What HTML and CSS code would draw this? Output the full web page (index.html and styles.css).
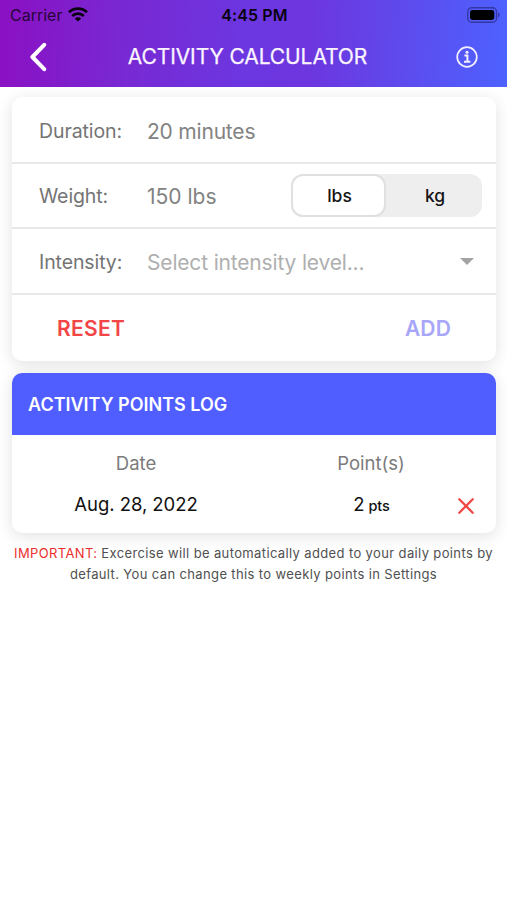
FILE: index.html
```html
<!DOCTYPE html>
<html lang="en">
<head>
<meta charset="utf-8">
<meta name="viewport" content="width=device-width, initial-scale=1">
<title>Activity Calculator</title>
<link rel="stylesheet" href="styles.css">
</head>
<body>
<header class="header">
  <div class="status">
    <div class="status-left"><span class="carrier">Carrier</span>
      <svg class="wifi" width="20" height="15" viewBox="0 0 20 15" fill="none" stroke="#08030f" stroke-width="2.7"><path d="M1 5.3a13 13 0 0 1 18 0M4.2 8.9a8.4 8.4 0 0 1 11.6 0"/><path d="M10 14.6 6.8 11.5a4.6 4.6 0 0 1 6.4 0z" fill="#08030f" stroke="none"/></svg>
    </div>
    <span class="clock">4:45 PM</span>
    <svg class="battery" width="33" height="16" viewBox="0 0 33 16"><rect x=".75" y=".75" width="28.8" height="14.5" rx="4" fill="none" stroke="#3437a2" stroke-width="1.3"/><rect x="3" y="3" width="24.3" height="10" rx="2.4" fill="#000"/><path d="M31 5.5c2 .8 2 4.2 0 5z" fill="#3437a2"/></svg>
  </div>
  <nav class="nav">
    <svg class="back" width="18" height="30" viewBox="0 0 18 30"><path d="M15.2 2.8 3.4 15l11.8 12.2" fill="none" stroke="#fff" stroke-width="4" stroke-linejoin="round" stroke-linecap="round"/></svg>
    <h1 class="title">ACTIVITY CALCULATOR</h1>
    <svg class="info" width="22" height="22" viewBox="0 0 22 22" fill="none" stroke="#f3efff" stroke-width="1.7"><circle cx="11" cy="11" r="9.8"/><path d="M8.4 9.5h3v6M8 15.7h6.4" stroke-width="2"/><circle cx="11" cy="6.2" r="1.5" fill="#f3efff" stroke="none"/></svg>
  </nav>
</header>
<main class="main">
  <section class="card form">
    <div class="row"><span class="label">Duration:</span><span class="value duration">20 minutes</span></div>
    <div class="row"><span class="label">Weight:</span><span class="value">150 lbs</span>
      <div class="segment"><span class="option selected">lbs</span><span class="option">kg</span></div>
    </div>
    <div class="row"><span class="label">Intensity:</span><span class="value placeholder">Select intensity level...</span>
      <svg class="caret" width="14" height="7" viewBox="0 0 14 7"><path d="M0 0h14L7 7z" fill="#a3a3a3"/></svg>
    </div>
    <div class="actions"><span class="reset">RESET</span><span class="add">ADD</span></div>
  </section>
  <section class="card log">
    <h2 class="log-title">ACTIVITY POINTS LOG</h2>
    <div class="grid">
      <span class="head">Date</span><span class="head">Point(s)</span><span></span>
      <span class="cell">Aug. 28, 2022</span><span class="cell pts">2<small>pts</small></span>
      <svg class="remove" width="16" height="16" viewBox="0 0 16 16"><path d="m1.3 1.3 13.4 13.4m0-13.4L1.3 14.7" stroke="#f24545" stroke-width="2.3" stroke-linecap="round"/></svg>
    </div>
  </section>
  <p class="note"><b>IMPORTANT:</b> Excercise will be automatically added to your daily points by<br>default. You can change this to weekly points in Settings</p>
</main>
</body>
</html>
```
FILE: styles.css
```css
* { box-sizing: border-box; }
body { margin: 0; background: #fff; color: #111; font-family: Inter, "Liberation Sans", sans-serif; overflow: hidden; height: 900px; }
.header { height: 87px; background: linear-gradient(93deg, #8b10c3 0%, #7829d3 25%, #6c36e0 48%, #6d36df 61%, #5f49ec 78%, #4d62ff 100%); }
.status { height: 29px; display: grid; grid-template-columns: 1fr auto 1fr; align-items: center; padding: 0 8px 0 10px; color: #08030f; }
.status-left { display: flex; align-items: center; gap: 6px; }
.carrier { font-size: 16px; color: #260639; }
.clock { font-size: 16px; font-weight: 600; letter-spacing: .1px; }
.battery { justify-self: end; margin-right: -1px; }
.nav { height: 55px; display: grid; grid-template-columns: 98px 1fr 98px; align-items: center; }
.back { margin-left: 29px; }
.title { margin: 0 12px 0 0; justify-self: center; font-size: 21px; font-weight: 400; letter-spacing: -.1px; color: #fbf4ff; white-space: nowrap; -webkit-text-stroke: .25px #fbf4ff; }
.info { justify-self: end; margin-right: 29px; }
.main { padding: 10px 11px 0 12px; }
.card { border-radius: 10px; background: #fff; box-shadow: 0 3px 16px rgba(0,0,0,.12); }
.form { height: 264px; padding-top: 1px; }
.row { height: 65.5px; display: flex; align-items: center; border-bottom: 2px solid #e8e8e8; padding: 2px 14px 0 27px; color: #747474; }
.label { width: 108px; font-size: 19.5px; letter-spacing: -.1px; white-space: nowrap; }
.value { padding-top: 1px; font-size: 21px; color: #828282; white-space: nowrap; }
.duration { letter-spacing: -.2px; }
.placeholder { color: #afafaf; letter-spacing: -.17px; }
.segment { margin: -2px 0 0 auto; width: 191px; height: 43px; border-radius: 12px; background: #eee; display: flex; }
.option { flex: 1; display: flex; align-items: center; justify-content: center; padding-left: 2px; font-size: 17.5px; font-weight: 500; color: #151515; }
.selected { flex: 0 0 95px; background: #fff; border: 2px solid #e0e0e0; border-radius: 12px; }
.caret { margin: 0 8px 0 auto; }
.actions { height: 67px; display: flex; justify-content: space-between; align-items: center; padding: 1px 45px 0; font-size: 21px; font-weight: 600; }
.reset { color: #f24545; letter-spacing: .3px; }
.add { color: #a8a6f8; letter-spacing: .15px; }
.log { margin-top: 12px; height: 160px; }
.log-title { margin: 0; height: 62px; display: flex; align-items: center; padding-left: 16px; border-radius: 10px 10px 0 0; background: #505eff; color: #fff; font-size: 18px; font-weight: 600; }
.grid { display: grid; grid-template-columns: 248px 222px 14px; grid-template-rows: 43px 42px; padding-top: 6px; align-items: center; justify-items: center; }
.head { font-size: 18.5px; color: #7b7b7b; }
.cell { margin-top: -2px; font-size: 18.5px; color: #111; letter-spacing: -.05px; white-space: nowrap; }
.cell small { font-size: 14.5px; font-weight: 500; margin-left: 4px; }
.pts { padding-left: 1px; }
.remove { margin: 1px 0 0 -46px; }
.note { margin: 10px -11px 0 -12px; text-align: center; font-size: 13px; line-height: 20.5px; color: #505050; white-space: nowrap; letter-spacing: .37px; }
.note b { font-weight: 400; color: #ec2d2d; }
```
